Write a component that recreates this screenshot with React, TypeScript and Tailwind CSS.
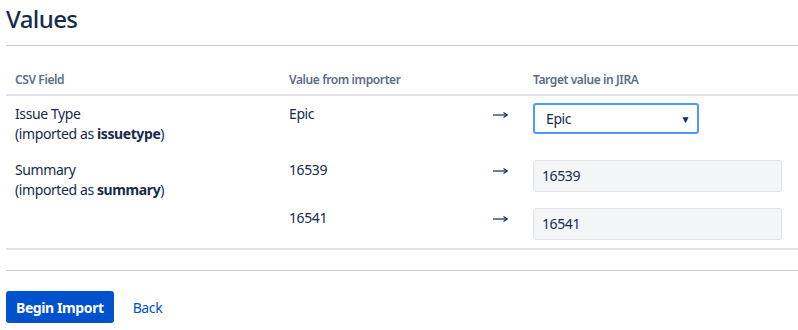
import React from 'react';

const font = { fontFamily: '"Noto Sans", "Open Sans", Arial, sans-serif' };

function Arrow() {
  return (
    <svg width="15" height="8" viewBox="0 0 15 8" className="mt-[7px] ml-[0px]">
      <path d="M0 4 H14" stroke="#172b4d" strokeWidth="1.2" />
      <path d="M10.5 1.5 L14.3 4 L10.5 6.5" stroke="#172b4d" strokeWidth="1.1" fill="none" />
    </svg>
  );
}

function ReadOnly({ value }: { value: string }) {
  return (
    <div className="w-[249px] h-[32px] rounded-[3px] border border-[#dfe1e6] bg-[#f4f5f7] px-[8px] flex items-center text-[14px] text-[#172b4d]">
      {value}
    </div>
  );
}

export default function App() {
  const cell = 'px-[9px]';
  return (
    <div className="bg-white w-[798px] h-[330px] overflow-hidden text-[#172b4d] tracking-[-0.4px]" style={font}>
      <h1 className="px-[6px] pt-[3px] text-[24px] leading-[32px] font-medium text-[#172b4d] tracking-[-0.6px]">Values</h1>
      <div className="ml-[6px] mt-[10px] h-px bg-[#cccccc]" />

      {/* Table */}
      <div className="ml-[6px] text-[14px] leading-5">
        <div className="grid grid-cols-[274px_204px_40px_1fr] h-[50px] items-end pb-[6px] border-b-2 border-[#dfe1e6] text-[12px] leading-4 font-semibold text-[#5e6c84]">
          <div className={cell}>CSV Field</div>
          <div className={cell}>Value from importer</div>
          <div />
          <div className={cell}>Target value in JIRA</div>
        </div>

        <div className="grid grid-cols-[274px_204px_40px_1fr] py-[8px]">
          <div className={cell}>
            <div>Issue Type</div>
            <div>(imported as <b className="font-bold">issuetype</b>)</div>
          </div>
          <div className={cell}>Epic</div>
          <div className={cell}><Arrow /></div>
          <div className={cell}>
            <div className="-mt-[1px] w-[166px] h-[31px] rounded-[3px] border-2 border-[#4c9aff] bg-white flex items-center justify-between pl-[11px] pr-[7px]">
              <span className="text-[14px]">Epic</span>
              <span className="text-[10px] text-[#172b4d]">▼</span>
            </div>
          </div>
        </div>

        <div className="grid grid-cols-[274px_204px_40px_1fr] pt-[8px]">
          <div className={cell}>
            <div>Summary</div>
            <div>(imported as <b className="font-bold">summary</b>)</div>
          </div>
          <div className={cell}>16539</div>
          <div className={cell}><Arrow /></div>
          <div className={cell}><ReadOnly value="16539" /></div>
        </div>

        <div className="grid grid-cols-[274px_204px_40px_1fr] pt-[8px] pb-[8px] border-b-2 border-[#dfe1e6]">
          <div className={cell} />
          <div className={cell}>16541</div>
          <div className={cell}><Arrow /></div>
          <div className={cell}><ReadOnly value="16541" /></div>
        </div>
      </div>

      <div className="ml-[6px] mt-[20px] h-px bg-[#cccccc]" />

      <div className="px-[6px] mt-[20px] flex items-center gap-[19px]">
        <button className="h-[32px] px-[10px] rounded-[3px] bg-[#0052cc] text-white text-[14px] font-bold">Begin Import</button>
        <a className="text-[14px] text-[#0052cc]">Back</a>
      </div>
    </div>
  );
}
